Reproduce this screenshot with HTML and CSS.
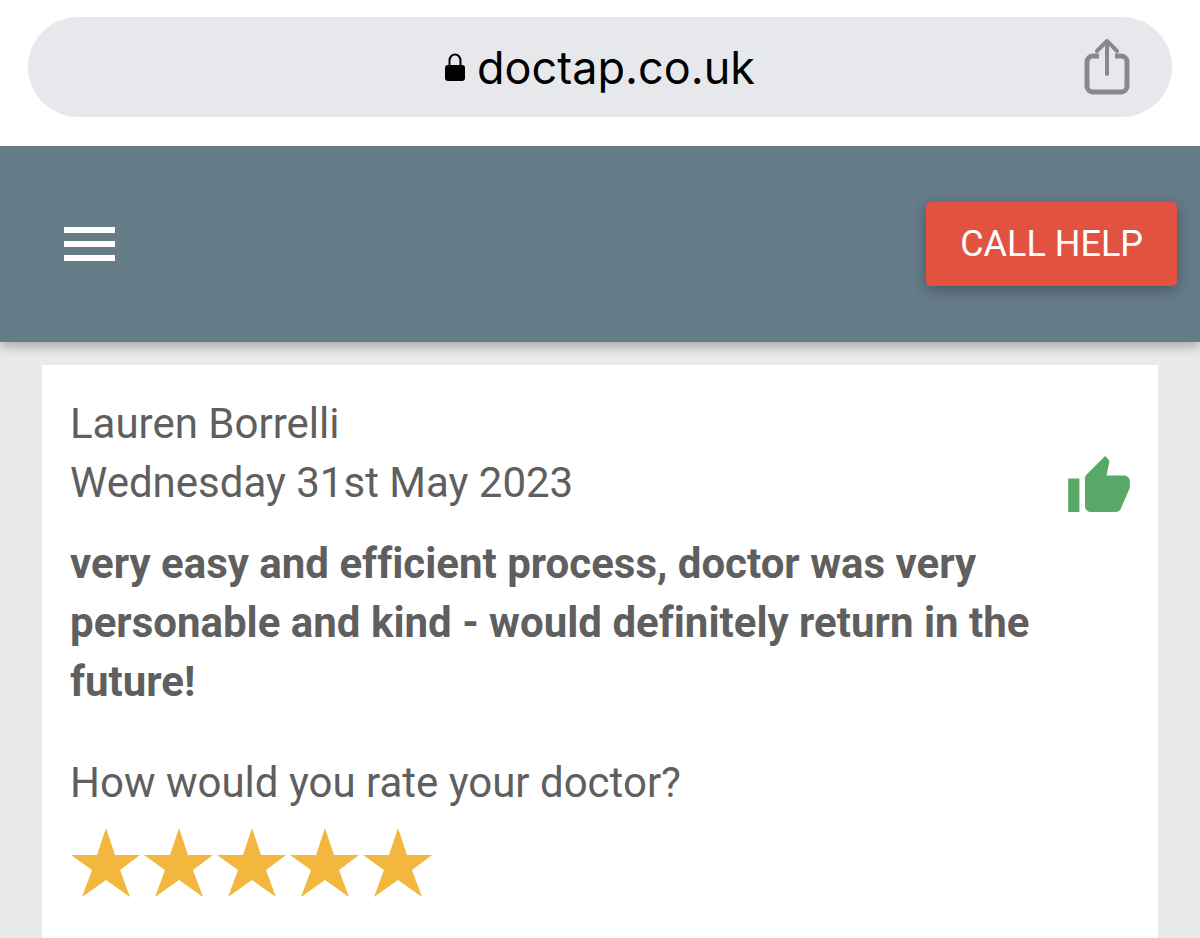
FILE: index.html
```html
<!DOCTYPE html>
<html lang="en">
<head>
    <meta charset="UTF-8">
    <meta name="viewport" content="width=device-width, initial-scale=1">
    <title>Doctap reviews</title>
    <link rel="stylesheet" href="styles.css">
</head>
<body>
<div class="browser">
    <div class="address">
        <div class="url">
            <svg class="lock" viewBox="0 0 20 28" aria-hidden="true">
                <path d="M4.500 13V7.500a5.500 6 0 0 1 11 0V13" fill="none" stroke="#000" stroke-width="2"/>
                <rect x="0" y="12" width="20" height="16" rx="3"/>
            </svg>
            <span>doctap.co.uk</span>
        </div>
        <button class="share" aria-label="Share">
            <svg viewBox="0 0 46 58" fill="none" stroke="#87898c" stroke-width="5" stroke-linejoin="round">
                <path d="M15 18H9a6 6 0 0 0-6 6v24a6 6 0 0 0 6 6h28a6 6 0 0 0 6-6V24a6 6 0 0 0-6-6h-6"/>
                <path d="M23 36V4M13 13L23 3l10 10" stroke-width="4" stroke-linecap="round"/>
            </svg>
        </button>
    </div>
</div>

<header class="navbar">
    <button class="menu" aria-label="Menu">
        <span></span>
        <span></span>
        <span></span>
    </button>
    <button class="call">CALL HELP</button>
</header>

<main class="content">
    <article class="review">
        <div class="review-head">
            <div>
                <div class="name">Lauren Borrelli</div>
                <div class="date">Wednesday 31st May 2023</div>
            </div>
            <svg class="thumb" viewBox="1 1 22 20" role="img" aria-label="Recommended">
                <path d="M1 21h4V9H1v12zm22-11c0-1.100-.9-2-2-2h-6.310l.95-4.570.03-.32c0-.41-.17-.79-.44-1.060L14.170 1 7.590 7.590C7.220 7.950 7 8.450 7 9v10c0 1.100.9 2 2 2h9c.83 0 1.540-.5 1.840-1.220l3.020-7.050c.09-.23.14-.47.14-.73v-2z"/>
            </svg>
        </div>
        <p class="comment">very easy and efficient process, doctor was very personable and kind - would definitely return in the future!</p>
        <p class="question">How would you rate your doctor?</p>
        <div class="stars" role="img" aria-label="5 out of 5">
            <svg viewBox="0 0 70 70"><path d="M36 0l9 27h25L50 42l10 27-24-17-24 17 10-27L1 27h26z"/></svg>
            <svg viewBox="0 0 70 70"><path d="M36 0l9 27h25L50 42l10 27-24-17-24 17 10-27L1 27h26z"/></svg>
            <svg viewBox="0 0 70 70"><path d="M36 0l9 27h25L50 42l10 27-24-17-24 17 10-27L1 27h26z"/></svg>
            <svg viewBox="0 0 70 70"><path d="M36 0l9 27h25L50 42l10 27-24-17-24 17 10-27L1 27h26z"/></svg>
            <svg viewBox="0 0 70 70"><path d="M36 0l9 27h25L50 42l10 27-24-17-24 17 10-27L1 27h26z"/></svg>
        </div>
    </article>
</main>
</body>
</html>
```
FILE: styles.css
```css
* {
    box-sizing: border-box;
}

body {
    margin: 0;
    min-height: 100vh;
    display: flex;
    flex-direction: column;
    background-color: #eaeaea;
    color: #5f5f5f;
    font-family: Roboto, "Liberation Sans", sans-serif;
    font-size: 42px;
    line-height: 59px;
    font-variant-ligatures: none;
}

button {
    border: 0;
    padding: 0;
    background: none;
    font: inherit;
    cursor: pointer;
}

svg {
    display: block;
}

.browser {
    position: relative;
    z-index: 1;
    padding: 17px 28px 29px;
    background-color: #fff;
}

.address {
    display: grid;
    grid-template-columns: 1fr auto 1fr;
    align-items: center;
    height: 100px;
    padding: 0 42px;
    border-radius: 50px;
    background-color: #e7e8eb;
}

.url {
    grid-column: 2;
    display: flex;
    align-items: center;
    gap: 12px;
    color: #000;
    font-family: Inter, "Liberation Sans", sans-serif;
    font-size: 45px;
}

.lock {
    width: 20px;
    height: 28px;
}

.share {
    justify-self: end;
}

.share svg {
    width: 46px;
    height: 58px;
}

.navbar {
    position: relative;
    display: flex;
    align-items: center;
    justify-content: space-between;
    height: 196px;
    padding: 0 23px 0 64px;
    background-color: #657c89;
    box-shadow: 0 4px 12px rgba(0, 0, 0, 0.3);
}

.menu {
    display: flex;
    flex-direction: column;
    gap: 8px;
    width: 51px;
}

.menu span {
    height: 6px;
    background-color: #fff;
}

.call {
    height: 84px;
    padding: 0 34px;
    border-radius: 5px;
    background-color: #e25241;
    color: #fff;
    font-size: 36px;
    box-shadow: 0 4px 16px rgba(0, 0, 0, 0.3);
}

.content {
    flex: 1;
    display: flex;
    padding: 23px 42px 0;
}

.review {
    position: relative;
    flex: 1;
    padding: 29px 28px;
    background-color: #fff;
}

.review-head {
    display: flex;
    justify-content: space-between;
    align-items: flex-end;
}

.thumb {
    width: 62px;
    height: 56px;
    fill: #58a967;
}

.comment {
    margin: 22px 0 0;
    font-weight: bold;
}

.question {
    margin: 42px 0 0;
}

.stars {
    display: flex;
    gap: 3px;
    margin-top: 16px;
}

.stars svg {
    width: 70px;
    height: 70px;
    fill: #f3b73f;
}
```
